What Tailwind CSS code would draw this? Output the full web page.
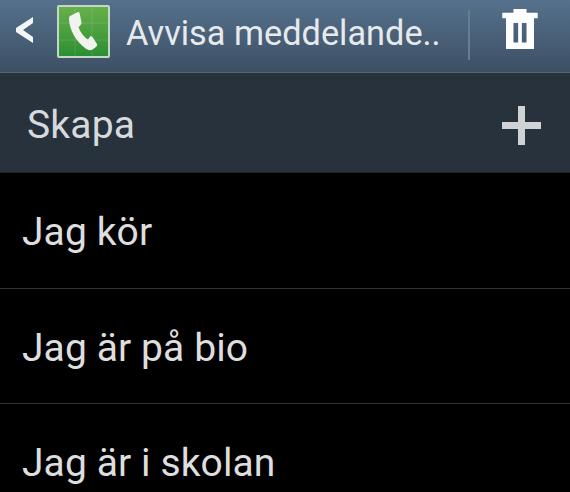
<!DOCTYPE html>
<html lang="en">
  <head>
    <meta charset="UTF-8" />
    <title>Avvisa meddelanden</title>
    <script src="https://cdn.jsdelivr.net/npm/@tailwindcss/browser@4"></script>
  </head>
  <body class="bg-black overflow-hidden font-[Roboto,sans-serif]">
    <div class="w-[570px] h-[492px] overflow-hidden">
      <header class="h-[73px] flex items-center bg-gradient-to-b from-[#56718c] to-[#3c5064] border-b border-[#536678]">
        <svg class="ml-[16px] w-[18px] h-[26px] mb-[13px] shrink-0" viewBox="0 0 18 26">
          <path d="M17 0 L17 6 L7 13 L17 20 L17 26 L0 15 L0 11 Z" fill="#f4f6f8" />
        </svg>
        <div class="ml-[23px] w-[53px] h-[53px] mb-[10px] border-2 border-[#c6d6c4] rounded-[2px] bg-gradient-to-b from-[#66b04a] to-[#2a8f34] shrink-0 overflow-hidden">
          <svg class="w-[49px] h-[49px]" viewBox="0 0 49 49">
            <path d="M16 0 V49 M33 0 V49 M0 16 H49 M0 33 H49" stroke="#ffffff" stroke-opacity="0.12" fill="none" />
            <path d="M11 9 L19 5 C20 5 20.500 5.500 20.700 6.500 L22.500 15.500 C22.600 17 21.500 18.500 19.500 20 C21 25 25 30 29 32.500 L31 29.500 C32 29 33 29.300 33.500 30 L38 37 C38.300 38 38 39 37 40 L33.500 42.500 C31 43.800 28.500 43 26 41 C17 34 11 24 10 13 C9.900 11 10 10 11 9 Z" fill="#f0f3ee" />
          </svg>
        </div>
        <h1 class="ml-[16px] text-[34.300px] leading-none text-[#e6eaed] whitespace-nowrap w-[342px] mb-[5px] shrink-0">Avvisa meddelande..</h1>
        <div class="w-[2px] h-[50px] bg-[#667d93] mb-[2px] shrink-0"></div>
        <svg class="ml-[31px] w-[38px] h-[41px] mb-[13px] shrink-0" viewBox="0 0 40 44">
          <path fill-rule="evenodd" fill="#ffffff" d="M13 0 H27 V4 H39 V10 H35 V43 H5 V10 H1 V4 H13 Z M13 15 V36 H18 V15 Z M22 15 V36 H27 V15 Z" />
        </svg>
      </header>
      <div class="h-[100px] flex items-center justify-between bg-[#27323c] border-b border-[#1c242b] pl-[27px] pr-[29px]">
        <span class="text-[39px] leading-none text-[#d6dadd] mt-[5px] tracking-[0.2px]">Skapa</span>
        <svg class="w-[39px] h-[39px] mt-[6px]" viewBox="0 0 39 39">
          <path fill="#d0d3d5" d="M16 0 H23 V16 H39 V23 H23 V39 H16 V23 H0 V16 H16 Z" />
        </svg>
      </div>
      <ul class="text-[39px] leading-none text-[#dedede] tracking-[0.1px]">
        <li class="h-[116px] flex items-center pl-[22px] border-b border-[#333333]"><span class="mt-[4px]">Jag kör</span></li>
        <li class="h-[115px] flex items-center pl-[22px] border-b border-[#333333]"><span class="mt-[4px]">Jag är på bio</span></li>
        <li class="h-[115px] flex items-center pl-[22px]"><span class="mt-[4px]">Jag är i skolan</span></li>
      </ul>
    </div>
  </body>
</html>
